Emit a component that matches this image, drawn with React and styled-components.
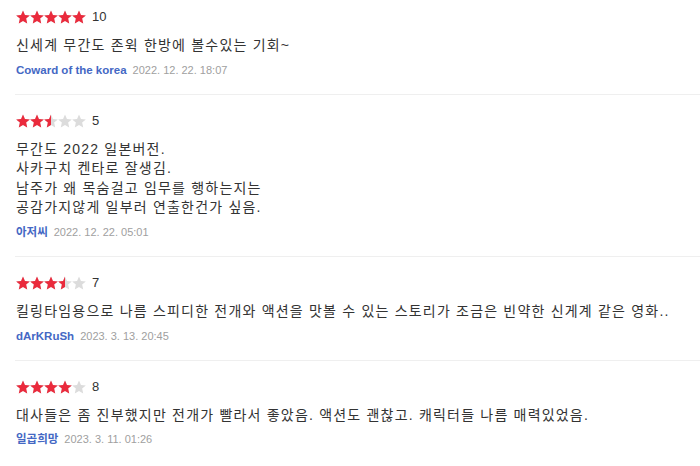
import React from "react";
import styled, { createGlobalStyle } from "styled-components";

const Global = createGlobalStyle`
  html, body { margin: 0; padding: 0; background: #fff; }
  body { font-family: "Liberation Sans", "Noto Sans CJK KR", sans-serif; color: #333; }
`;

const List = styled.div`
  padding-left: 15px;
  width: 685px;
`;

const Item = styled.div`
  padding: 19px 0 15px 1px;
  border-bottom: 1px solid #efefef;
  &:first-child { padding-top: 10px; }
  &:last-child { border-bottom: none; }
`;

const RatingRow = styled.div`
  display: flex;
  align-items: center;
  height: 14px;
`;

const Stars = styled.div`
  display: flex;
`;

const Score = styled.span`
  margin-left: 6px;
  font-size: 13px;
  color: #333;
  line-height: 14px;
`;

const Body = styled.p`
  margin: 12px 0 5px;
  font-size: 14px;
  letter-spacing: 1.2px;
  line-height: 19.6px;
  color: #333;
  white-space: pre-line;
`;

const Meta = styled.div`
  display: flex;
  align-items: baseline;
  gap: 6px;
  line-height: 18px;
`;

const Author = styled.span`
  font-size: 11.5px;
  font-weight: bold;
  color: #4468c4;
`;

const DateText = styled.span`
  font-size: 11px;
  color: #a0a0a0;
`;

const STAR =
  "M7 0.4 L8.94 4.93 L13.85 5.38 L10.14 8.62 L11.23 13.42 L7 10.9 L2.77 13.42 L3.86 8.62 L0.15 5.38 L5.06 4.93 Z";

function Star({ fill, id }) {
  return (
    <svg width="14" height="14" viewBox="0 0 14 14">
      <defs>
        <clipPath id={id}>
          <rect x="0" y="0" width={14 * fill} height="14" />
        </clipPath>
      </defs>
      <path d={STAR} fill="#dcdcdc" />
      {fill > 0 && <path d={STAR} fill="#ea2a3c" clipPath={`url(#${id})`} />}
    </svg>
  );
}

function StarRating({ score, idx }) {
  const value = score / 2;
  return (
    <Stars>
      {[0, 1, 2, 3, 4].map((i) => {
        const f = Math.max(0, Math.min(1, value - i));
        return <Star key={i} fill={f} id={`s${idx}-${i}`} />;
      })}
    </Stars>
  );
}

const reviews = [
  {
    score: 10,
    text: "신세계 무간도 존윅 한방에 볼수있는 기회~",
    author: "Coward of the korea",
    date: "2022. 12. 22. 18:07",
  },
  {
    score: 5,
    text: "무간도 2022 일본버전.\n사카구치 켄타로 잘생김.\n남주가 왜 목숨걸고 임무를 행하는지는\n공감가지않게 일부러 연출한건가 싶음.",
    author: "아저씨",
    date: "2022. 12. 22. 05:01",
  },
  {
    score: 7,
    text: "킬링타임용으로 나름 스피디한 전개와 액션을 맛볼 수 있는 스토리가 조금은 빈약한 신게계 같은 영화..",
    author: "dArKRuSh",
    date: "2023. 3. 13. 20:45",
  },
  {
    score: 8,
    text: "대사들은 좀 진부했지만 전개가 빨라서 좋았음. 액션도 괜찮고.  캐릭터들 나름 매력있었음.",
    author: "일곱희망",
    date: "2023. 3. 11. 01:26",
  },
];

export default function App() {
  return (
    <>
      <Global />
      <List>
        {reviews.map((r, i) => (
          <Item key={i}>
            <RatingRow>
              <StarRating score={r.score} idx={i} />
              <Score>{r.score}</Score>
            </RatingRow>
            <Body>{r.text}</Body>
            <Meta>
              <Author>{r.author}</Author>
              <DateText>{r.date}</DateText>
            </Meta>
          </Item>
        ))}
      </List>
    </>
  );
}
